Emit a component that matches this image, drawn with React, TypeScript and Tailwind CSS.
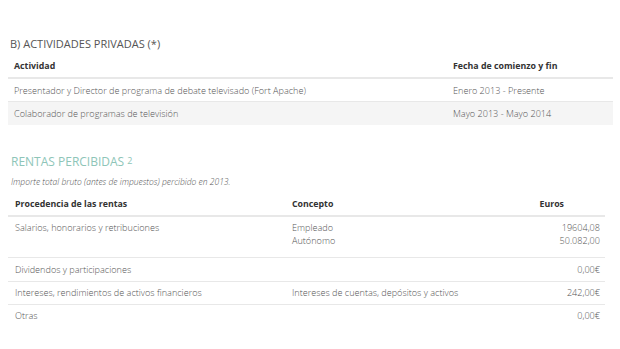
import React from "react";

const font = { fontFamily: '"Open Sans", "Noto Sans", sans-serif' };

export default function App() {
  return (
    <div className="w-[620px] h-[349px] bg-white text-[#555] overflow-hidden" style={font}>
      <div className="pt-[36px] pl-[8px] pr-[7px]">
        <h2 className="pl-[2px] text-[11px] leading-[16px] font-normal text-[#555]">
          B) ACTIVIDADES PRIVADAS (*)
        </h2>
        <div className="mt-[5px] text-[9.1px] font-light">
          <div className="flex h-[22px] items-center border-b-2 border-[#e8e8e8] text-[8.8px] font-bold text-[#333]">
            <div className="w-[445px] pl-[6px]">Actividad</div>
            <div className="flex-1">Fecha de comienzo y fin</div>
          </div>
          <div className="flex h-[23px] items-center border-b border-[#e8e8e8] bg-white pt-[1px]">
            <div className="w-[445px] pl-[6px]">Presentador y Director de programa de debate televisado (Fort Apache)</div>
            <div className="flex-1">Enero 2013 - Presente</div>
          </div>
          <div className="flex h-[23px] items-center bg-[#f5f5f5]">
            <div className="w-[445px] pl-[6px]">Colaborador de programas de televisión</div>
            <div className="flex-1">Mayo 2013 - Mayo 2014</div>
          </div>
        </div>

        <h2 className="mt-[29px] pl-[3px] text-[12px] leading-[16px] font-normal text-[#8ec5b8]">
          RENTAS PERCIBIDAS <sup className="text-[9px] relative -top-[2px]">2</sup>
        </h2>
        <p className="mt-[6px] pl-[3px] text-[8.5px] leading-[12px] italic font-light text-[#555]">
          Importe total bruto (antes de impuestos) percibido en 2013.
        </p>
        <div className="mt-[6px] w-[597px] text-[9.1px] font-light">
          <div className="flex h-[23px] items-center border-b-2 border-[#e8e8e8] text-[8.8px] font-bold text-[#333]">
            <div className="w-[284px] pl-[7px]">Procedencia de las rentas</div>
            <div className="flex-1">Concepto</div>
            <div className="w-[80px] pr-[41px] text-right">Euros</div>
          </div>
          <div className="flex h-[41px] items-start border-b border-[#e8e8e8] pt-[4px] leading-[13px]">
            <div className="w-[284px] pl-[7px]">Salarios, honorarios y retribuciones</div>
            <div className="flex-1">
              <div>Empleado</div>
              <div>Autónomo</div>
            </div>
            <div className="w-[80px] pr-[5px] text-right">
              <div>19604,08</div>
              <div>50.082,00</div>
            </div>
          </div>
          <div className="flex h-[24px] items-center border-b border-[#e8e8e8]">
            <div className="w-[284px] pl-[7px]">Dividendos y participaciones</div>
            <div className="flex-1"></div>
            <div className="w-[80px] pr-[5px] text-right">0,00€</div>
          </div>
          <div className="flex h-[23px] items-center border-b border-[#e8e8e8]">
            <div className="w-[284px] pl-[7px]">Intereses, rendimientos de activos financieros</div>
            <div className="flex-1">Intereses de cuentas, depósitos y activos</div>
            <div className="w-[80px] pr-[5px] text-right">242,00€</div>
          </div>
          <div className="flex h-[22px] items-center">
            <div className="w-[284px] pl-[7px]">Otras</div>
            <div className="flex-1"></div>
            <div className="w-[80px] pr-[5px] text-right">0,00€</div>
          </div>
        </div>
      </div>
    </div>
  );
}
